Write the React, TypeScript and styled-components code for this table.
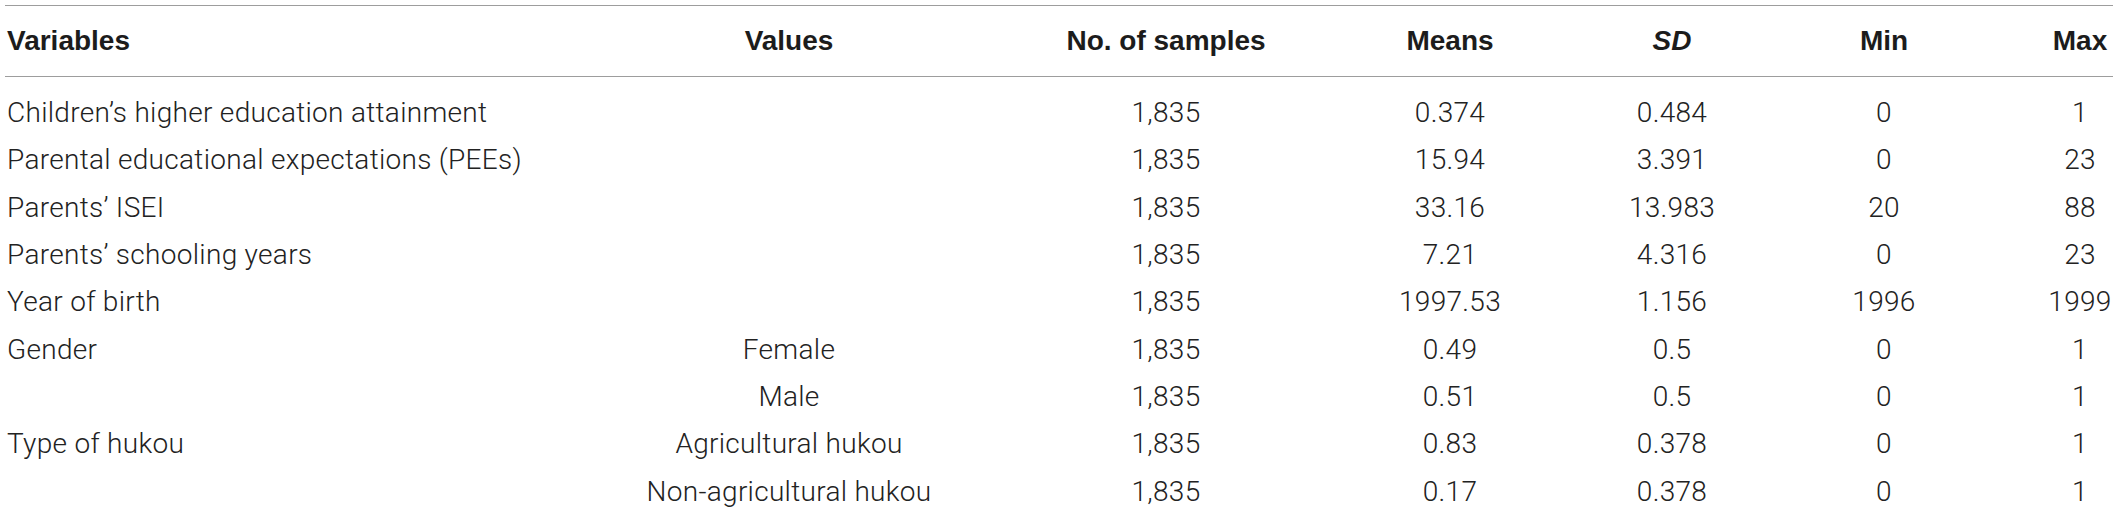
import React from "react"
import styled, { createGlobalStyle } from "styled-components"

const GlobalStyle = createGlobalStyle`
  html, body {
    margin: 0;
    padding: 0;
    background: #ffffff;
  }
`

type Row = {
  variable: string
  value: string
  samples: string
  mean: string
  sd: string
  min: string
  max: string
}

const rows: Row[] = [
  { variable: "Children’s higher education attainment", value: "", samples: "1,835", mean: "0.374", sd: "0.484", min: "0", max: "1" },
  { variable: "Parental educational expectations (PEEs)", value: "", samples: "1,835", mean: "15.94", sd: "3.391", min: "0", max: "23" },
  { variable: "Parents’ ISEI", value: "", samples: "1,835", mean: "33.16", sd: "13.983", min: "20", max: "88" },
  { variable: "Parents’ schooling years", value: "", samples: "1,835", mean: "7.21", sd: "4.316", min: "0", max: "23" },
  { variable: "Year of birth", value: "", samples: "1,835", mean: "1997.53", sd: "1.156", min: "1996", max: "1999" },
  { variable: "Gender", value: "Female", samples: "1,835", mean: "0.49", sd: "0.5", min: "0", max: "1" },
  { variable: "", value: "Male", samples: "1,835", mean: "0.51", sd: "0.5", min: "0", max: "1" },
  { variable: "Type of hukou", value: "Agricultural hukou", samples: "1,835", mean: "0.83", sd: "0.378", min: "0", max: "1" },
  { variable: "", value: "Non-agricultural hukou", samples: "1,835", mean: "0.17", sd: "0.378", min: "0", max: "1" },
]

// column widths picked so each centred column lands where it sits in the print
const colWidths = [518, 532, 222, 346, 98, 326, 66]

const Page = styled.div`
  padding: 5px 5px 0 5px;
`

const Table = styled.table`
  width: 2108px;
  table-layout: fixed;
  border-collapse: collapse;
  font-size: 28px;
`

const Col = styled.col<{ $w: number }>`
  width: ${(p) => p.$w}px;
`

const HeadRow = styled.tr`
  border-top: 1.5px solid #9d9d9d;
  border-bottom: 1.5px solid #9d9d9d;
`

const HeadCell = styled.th<{ $left?: boolean; $italic?: boolean }>`
  height: 70px;
  padding: 0 0 0 ${(p) => (p.$left ? "2px" : "0")};
  text-align: ${(p) => (p.$left ? "left" : "center")};
  vertical-align: middle;
  font-family: "Liberation Sans", Arial, sans-serif;
  font-weight: 700;
  font-style: ${(p) => (p.$italic ? "italic" : "normal")};
  color: #1c1c1c;
  white-space: nowrap;
`

const BodyRow = styled.tr`
  &:first-child td {
    padding-top: 12px;
  }
`

const Cell = styled.td<{ $left?: boolean }>`
  height: 47.3px;
  padding: 0 0 0 ${(p) => (p.$left ? "2px" : "0")};
  text-align: ${(p) => (p.$left ? "left" : "center")};
  vertical-align: middle;
  font-family: Roboto, "Liberation Sans", sans-serif;
  font-weight: 300;
  letter-spacing: 0.3px;
  color: #222222;
  white-space: nowrap;
`

export default function App() {
  return (
    <Page>
      <GlobalStyle />
      <Table>
        <colgroup>
          {colWidths.map((w, i) => (
            <Col key={i} $w={w} />
          ))}
        </colgroup>
        <thead>
          <HeadRow>
            <HeadCell $left>Variables</HeadCell>
            <HeadCell>Values</HeadCell>
            <HeadCell>No. of samples</HeadCell>
            <HeadCell>Means</HeadCell>
            <HeadCell $italic>SD</HeadCell>
            <HeadCell>Min</HeadCell>
            <HeadCell>Max</HeadCell>
          </HeadRow>
        </thead>
        <tbody>
          {rows.map((r, i) => (
            <BodyRow key={i}>
              <Cell $left>{r.variable}</Cell>
              <Cell>{r.value}</Cell>
              <Cell>{r.samples}</Cell>
              <Cell>{r.mean}</Cell>
              <Cell>{r.sd}</Cell>
              <Cell>{r.min}</Cell>
              <Cell>{r.max}</Cell>
            </BodyRow>
          ))}
        </tbody>
      </Table>
    </Page>
  )
}
